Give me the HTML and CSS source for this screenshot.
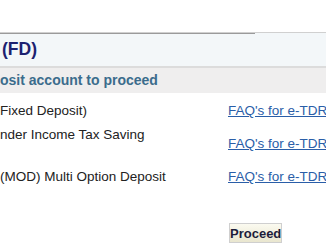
FILE: index.html
```html
<!DOCTYPE html>
<html lang="en">
<head>
    <meta charset="UTF-8">
    <meta name="viewport" content="width=device-width, initial-scale=1.0">
    <title>Fixed Deposit (FD)</title>
    <link rel="stylesheet" href="styles.css">
</head>
<body>
    <div class="page">
        <div class="panel-head">
            <h1>(FD)</h1>
        </div>
        <div class="section-bar">osit account to proceed</div>

        <div class="deposit-list">
            <div class="row">
                <div class="label">Fixed Deposit)</div>
                <div class="faq"><a href="#">FAQ's for e-TDR</a></div>
            </div>
            <div class="row tall">
                <div class="label">nder Income Tax Saving</div>
                <div class="faq"><a href="#">FAQ's for e-TDR</a></div>
            </div>
            <div class="row">
                <div class="label">(MOD) Multi Option Deposit</div>
                <div class="faq"><a href="#">FAQ's for e-TDR</a></div>
            </div>
        </div>

        <div class="actions">
            <button class="proceed-button">Proceed</button>
        </div>
    </div>
</body>
</html>
```

FILE: styles.css
```css
body {
    margin: 0;
    background: #ffffff;
    font-family: "Liberation Sans", Arial, sans-serif;
}
.page {
    padding-top: 32px;
    overflow: hidden;
}
.panel-head {
    height: 33px;
    background-color: #f3f7f9;
    background-image: linear-gradient(#9a9a9a, #9a9a9a);
    background-size: 255px 1px;
    background-repeat: no-repeat;
    border-top: 1px solid #d0d0d0;
    border-bottom: 2px solid #dcdcdc;
    display: flex;
    align-items: center;
}
.panel-head h1 {
    margin: 0;
    padding-left: 2px;
    font-size: 17.5px;
    font-weight: bold;
    color: #1c2170;
}
.section-bar {
    height: 25px;
    line-height: 25px;
    background: #efeeee;
    color: #3b6c8c;
    font-size: 14px;
    font-weight: bold;
}
.deposit-list {
    margin-top: 6px;
}
.row {
    display: grid;
    grid-template-columns: 228px 1fr;
    padding: 3px 0;
    font-size: 13.5px;
    line-height: 18px;
    color: #222222;
}
.row.tall {
    height: 36px;
}
.label {
    align-self: start;
    white-space: nowrap;
}
.faq {
    align-self: center;
    white-space: nowrap;
    overflow: hidden;
}
.faq a {
    color: #2a5ea8;
    text-decoration: underline;
}
.actions {
    padding: 34px 0 0 229px;
}
.proceed-button {
    width: 53px;
    height: 20px;
    padding: 0;
    border: 1px solid #cfcfcf;
    background: linear-gradient(#fbfaf0, #e9e6cf);
    font-family: "Liberation Sans", Arial, sans-serif;
    font-size: 13px;
    font-weight: bold;
    color: #1d1d3a;
    cursor: pointer;
}
```
